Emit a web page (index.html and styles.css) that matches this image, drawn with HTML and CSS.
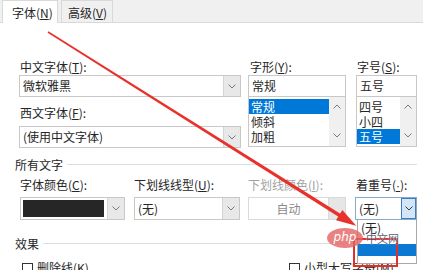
FILE: index.html
```html
<!DOCTYPE html>
<html lang="zh">
<head>
<meta charset="utf-8">
<link rel="stylesheet" href="styles.css">
</head>
<body>
<div class="dialog">
  <div class="tabs">
    <div class="tab active">字体(<u>N</u>)</div>
    <div class="tab">高级(<u>V</u>)</div>
  </div>
  <div class="content">
    <div class="fontgrid">
      <div class="col col-name">
        <div class="lbl">中文字体(<u>T</u>):</div>
        <div class="combo"><span class="val">微软雅黑</span><span class="btn"><svg width="8" height="5" viewBox="0 0 8 5"><path d="M0.5 0.5 L4 4 L7.5 0.5" fill="none" stroke="#7a7a7a"/></svg></span></div>
        <div class="lbl lbl2">西文字体(<u>F</u>):</div>
        <div class="combo combo2"><span class="val">(使用中文字体)</span><span class="btn"><svg width="8" height="5" viewBox="0 0 8 5"><path d="M0.5 0.5 L4 4 L7.5 0.5" fill="none" stroke="#7a7a7a"/></svg></span></div>
      </div>
      <div class="col col-style">
        <div class="lbl">字形(<u>Y</u>):</div>
        <div class="textbox">常规</div>
        <div class="listbox">
          <div class="items">
            <div class="item sel">常规</div>
            <div class="item">倾斜</div>
            <div class="item">加粗</div>
          </div>
          <div class="scroll">
            <svg width="8" height="5" viewBox="0 0 8 5"><path d="M0.5 4.5 L4 1 L7.5 4.5" fill="none" stroke="#7a7a7a"/></svg>
            <svg width="8" height="5" viewBox="0 0 8 5"><path d="M0.5 0.5 L4 4 L7.5 0.5" fill="none" stroke="#7a7a7a"/></svg>
          </div>
        </div>
      </div>
      <div class="col col-size">
        <div class="lbl">字号(<u>S</u>):</div>
        <div class="textbox">五号</div>
        <div class="listbox">
          <div class="items">
            <div class="item">四号</div>
            <div class="item">小四</div>
            <div class="item sel">五号</div>
          </div>
          <div class="scroll">
            <svg width="8" height="5" viewBox="0 0 8 5"><path d="M0.5 4.5 L4 1 L7.5 4.5" fill="none" stroke="#7a7a7a"/></svg>
            <svg width="8" height="5" viewBox="0 0 8 5"><path d="M0.5 0.5 L4 4 L7.5 0.5" fill="none" stroke="#7a7a7a"/></svg>
          </div>
        </div>
      </div>
    </div>

    <div class="group g1">所有文字</div>

    <div class="row4">
      <div class="field f1">
        <div class="lbl">字体颜色(<u>C</u>):</div>
        <div class="combo tall"><span class="swatch"></span><span class="btn"><svg width="8" height="5" viewBox="0 0 8 5"><path d="M0.5 0.5 L4 4 L7.5 0.5" fill="none" stroke="#7a7a7a"/></svg></span></div>
      </div>
      <div class="field f2">
        <div class="lbl">下划线线型(<u>U</u>):</div>
        <div class="combo tall"><span class="val">(无)</span><span class="btn"><svg width="8" height="5" viewBox="0 0 8 5"><path d="M0.5 0.5 L4 4 L7.5 0.5" fill="none" stroke="#7a7a7a"/></svg></span></div>
      </div>
      <div class="field f3">
        <div class="lbl dis">下划线颜色(<u>I</u>):</div>
        <div class="combo tall disabled"><span class="val">自动</span><span class="btn"></span></div>
      </div>
      <div class="field f4">
        <div class="lbl">着重号(<u class="latin">·</u>):</div>
        <div class="combo tall focus"><span class="val">(无)</span><span class="btn"><svg width="8" height="5" viewBox="0 0 8 5"><path d="M0.5 0.5 L4 4 L7.5 0.5" fill="none" stroke="#3a3a3a"/></svg></span></div>
        <div class="droplist">
          <div class="ditem">(无)</div>
          <div class="dgap"></div>
          <div class="ditem dsel"></div>
        </div>
        <div class="redbox"></div>
      </div>
    </div>

    <div class="group g2">效果</div>

    <div class="checks">
      <div class="check c1"><span class="box"></span>删除线(<u>K</u>)</div>
      <div class="check c2"><span class="box"></span>小型大写字母(<u>M</u>)</div>
    </div>
  </div>

  <div class="watermark"><span class="php">php</span><span class="cn">中文网</span></div>

  <svg class="arrow" width="423" height="270" viewBox="0 0 423 270">
    <polygon points="47.6,32.63 48.4,31.37 343.96,215.98 342.04,219.02" fill="#e8312a"/>
    <polygon points="336.0,220.2 342.4,210.0 356.2,225.8" fill="#e8312a"/>
  </svg>
</div>
</body>
</html>
```

FILE: styles.css
```css
* {
  box-sizing: border-box;
  margin: 0;
  padding: 0;
}

html, body {
  width: 423px;
  height: 270px;
  overflow: hidden;
  background: #fff;
}

body {
  font-family: "Noto Sans CJK SC", "Noto Sans", sans-serif;
  font-size: 12px;
  color: #262626;
}

.latin {
  font-family: "Liberation Sans", sans-serif;
}

.dialog {
  position: relative;
  width: 423px;
  height: 270px;
}

/* tabs */
.tabs {
  display: flex;
  height: 23px;
  background: #f0f0f0;
  border-bottom: 1px solid #d9d9d9;
  padding-left: 2px;
}

.tab {
  height: 22px;
  line-height: 24px;
  border: 1px solid #d9d9d9;
  border-bottom: none;
  white-space: nowrap;
}

.tab.active {
  width: 56px;
  height: 23px;
  padding-left: 9px;
  background: #fff;
  position: relative;
  z-index: 1;
}

.tab + .tab {
  margin-left: 3px;
  width: 52px;
  padding-left: 6px;
  background: #f0f0f0;
}

/* content */
.content {
  padding: 0 6px 0 19px;
}

.lbl {
  height: 15px;
  line-height: 15px;
  white-space: nowrap;
}

.lbl.dis {
  color: #a3a3a3;
}

.fontgrid {
  display: flex;
  margin-top: 36px;
}

.col-name {
  width: 222px;
}

.col-name .lbl {
  padding-left: 1px;
}

.col-style {
  width: 98px;
  margin-left: 7px;
}

.col-style .lbl {
  padding-left: 2px;
}

.col-size {
  width: 61px;
  margin-left: 10px;
}

.col-size .lbl {
  padding-left: 1px;
}

.combo {
  display: flex;
  height: 22px;
  margin-top: 1px;
  border: 1px solid #c8c8c8;
  background: #fff;
}

.combo .val {
  flex: 1;
  padding-left: 3px;
  line-height: 20px;
  white-space: nowrap;
  overflow: hidden;
}

.combo .btn {
  width: 17px;
  background: #e8e8e8;
  border-left: 1px solid #d4d4d4;
  display: flex;
  align-items: center;
  justify-content: center;
}

.lbl2 {
  margin-top: 8px;
}

.combo2 {
  margin-top: 6px;
}

.textbox {
  height: 22px;
  margin-top: 1px;
  border: 1px solid #c8c8c8;
  line-height: 20px;
  padding-left: 3px;
}

.listbox {
  display: flex;
  height: 51px;
  margin-top: -1px;
  border: 1px solid #c8c8c8;
}

.items {
  flex: 1;
  padding-top: 2px;
}

.item {
  height: 15px;
  line-height: 15px;
  padding-left: 2px;
}

.item.sel {
  background: #0078d7;
  color: #fff;
}

.scroll {
  width: 16px;
  background: #f0f0f0;
  display: flex;
  flex-direction: column;
  justify-content: space-between;
  align-items: center;
  padding: 7px 0 8px;
}

/* group headers */
.group {
  display: flex;
  align-items: center;
  height: 15px;
  line-height: 15px;
  margin-left: -4px;
}

.group::after {
  content: "";
  flex: 1;
  height: 1px;
  background: #dedede;
  margin-left: 4px;
}

.g1 {
  margin-top: 9px;
}

.g2 {
  margin-top: 16px;
}

/* four-field row */
.row4 {
  display: flex;
  margin-top: 5px;
}

.field {
  position: relative;
}

.f1 {
  width: 105px;
  margin-left: 1px;
}

.f2 {
  width: 106px;
  margin-left: 9px;
}

.f3 {
  width: 98px;
  margin-left: 8px;
}

.f4 {
  width: 62px;
  margin-left: 9px;
}

.f4 .lbl {
  padding-left: 1px;
}

.combo.tall {
  height: 23px;
  margin-top: 5px;
}

.combo.tall .val {
  line-height: 21px;
}

.swatch {
  flex: 1;
  margin: 2px 3px 2px 2px;
  background: #262626;
}

.combo.disabled {
  border-color: #d9d9d9;
}

.combo.disabled .val {
  color: #8a8a8a;
  text-align: center;
  padding-left: 0;
}

.combo.disabled .btn {
  background: #e6e6e6;
  border-left-color: #dadada;
}

.combo.focus {
  border-color: #8aa8c8;
}

.combo.focus .btn {
  width: 15px;
  background: #d3e6f8;
  border: 1px solid #3d7ec2;
}

.droplist {
  position: absolute;
  left: 2px;
  right: 0;
  top: 43px;
  height: 44px;
  background: #fff;
  border: 1px solid #a8a8a8;
  border-top: none;
  z-index: 2;
}

.ditem {
  height: 16px;
  line-height: 16px;
  padding-left: 3px;
}

.dgap {
  height: 8px;
}

.ditem.dsel {
  height: 12px;
  background: #0b78d4;
}

.redbox {
  position: absolute;
  left: -2px;
  top: 61px;
  width: 45px;
  height: 29px;
  border: 2px solid #e0302a;
  z-index: 3;
}

/* checkboxes */
.checks {
  display: flex;
  margin-top: 10px;
}

.check {
  display: flex;
  align-items: center;
  height: 14px;
  line-height: 14px;
  white-space: nowrap;
}

.check .box {
  width: 11px;
  height: 11px;
  border: 1px solid #333;
  margin-right: 4px;
  background: #fff;
}

.check.c1 {
  width: 270px;
  padding-left: 3px;
}

/* watermark */
.watermark {
  position: absolute;
  left: 327px;
  top: 228px;
  display: flex;
  align-items: center;
  z-index: 4;
}

.watermark .php {
  width: 36px;
  height: 20px;
  border-radius: 50%;
  background: rgba(228, 100, 100, 0.8);
  color: #fff;
  font-family: "DejaVu Sans", sans-serif;
  font-style: italic;
  font-size: 12px;
  line-height: 19px;
  text-align: center;
}

.watermark .cn {
  margin-left: 3px;
  font-size: 11px;
  color: rgba(40, 40, 70, 0.75);
  text-shadow: 0 0 2px #fff;
}

.arrow {
  position: absolute;
  left: 0;
  top: 0;
  z-index: 5;
  pointer-events: none;
}
```
